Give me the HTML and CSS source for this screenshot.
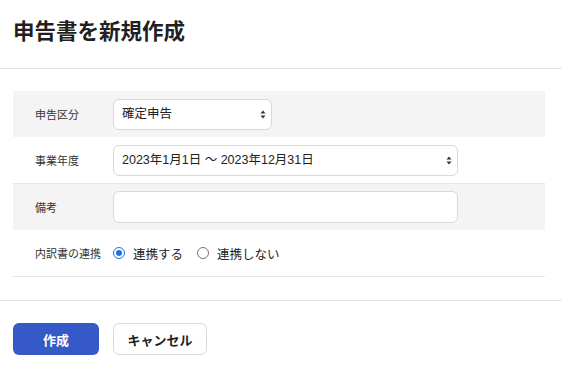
FILE: index.html
```html
<!DOCTYPE html>
<html lang="ja">
<head>
<meta charset="utf-8">
<link rel="stylesheet" href="styles.css">
</head>
<body>
<header class="header">
  <h1 class="title">申告書を新規作成</h1>
</header>
<section class="form">
  <div class="row shaded">
    <div class="label">申告区分</div>
    <div class="field">
      <div class="select-wrap short">
        <select class="select"><option>確定申告</option></select>
        <svg class="arrow" width="6" height="9" viewBox="0 0 6 9"><path d="M3 0.5 L5.5 3.5 L0.5 3.5 Z M3 8.5 L5.5 5.5 L0.5 5.5 Z" fill="#333"/></svg>
      </div>
    </div>
  </div>
  <div class="row lined">
    <div class="label">事業年度</div>
    <div class="field">
      <div class="select-wrap long">
        <select class="select"><option>2023年1月1日 ～ 2023年12月31日</option></select>
        <svg class="arrow" width="6" height="9" viewBox="0 0 6 9"><path d="M3 0.5 L5.5 3.5 L0.5 3.5 Z M3 8.5 L5.5 5.5 L0.5 5.5 Z" fill="#333"/></svg>
      </div>
    </div>
  </div>
  <div class="row shaded">
    <div class="label">備考</div>
    <div class="field">
      <input class="input" type="text">
    </div>
  </div>
  <div class="row lined">
    <div class="label">内訳書の連携</div>
    <div class="field radios">
      <label class="radio"><span class="dot on"></span>連携する</label>
      <label class="radio"><span class="dot"></span>連携しない</label>
    </div>
  </div>
</section>
<footer class="footer">
  <button class="btn primary">作成</button>
  <button class="btn secondary">キャンセル</button>
</footer>
</body>
</html>
```
FILE: styles.css
```css
* { box-sizing: border-box; }
body {
  margin: 0;
  background: #fff;
  font-family: "Noto Sans CJK JP", "Noto Sans", sans-serif;
  color: #333;
}
.header {
  padding: 16px 13px 24px;
  border-bottom: 1px solid #e3e3e3;
}
.title {
  margin: 0;
  font-size: 21.5px;
  line-height: 28px;
  font-weight: 700;
  color: #231f20;
}
.form {
  padding: 22px 17px 23px 13px;
  border-bottom: 1px solid #e3e3e3;
}
.row {
  display: flex;
  align-items: center;
  height: 47px;
}
.row.shaded { background: #f5f4f4; height: 46px; }
.row.lined { border-bottom: 1px solid #e6e6e6; }
.label {
  width: 100px;
  padding-left: 22px;
  font-size: 11px;
  color: #333;
  white-space: nowrap;
}
.field { flex: 1; }
.select-wrap { position: relative; }
.select-wrap.short { width: 159px; }
.select-wrap.long { width: 345px; }
.select {
  appearance: none;
  -webkit-appearance: none;
  width: 100%;
  height: 31px;
  border: 1px solid #d9d9d9;
  border-radius: 6px;
  background: #fff;
  padding: 0 20px 0 8px;
  font-family: "Liberation Sans", "Noto Sans CJK JP", sans-serif;
  font-size: 12.5px;
  color: #222;
}
.arrow {
  position: absolute;
  right: 6px;
  top: 11px;
}
.input {
  width: 345px;
  height: 32px;
  border: 1px solid #d9d9d9;
  border-radius: 6px;
  background: #fff;
}
.radios {
  display: flex;
  align-items: center;
  gap: 14px;
}
.radio {
  display: flex;
  align-items: center;
  gap: 8px;
  font-size: 12.5px;
  color: #222;
}
.dot {
  width: 12px;
  height: 12px;
  border-radius: 50%;
  border: 1px solid #767676;
  background: #fff;
  position: relative;
}
.dot.on {
  border: 1.5px solid #1a73e8;
}
.dot.on::after {
  content: "";
  position: absolute;
  left: 1.5px;
  top: 1.5px;
  width: 6px;
  height: 6px;
  border-radius: 50%;
  background: #1a73e8;
}
.footer {
  display: flex;
  gap: 14px;
  padding: 22px 13px;
}
.btn {
  height: 32px;
  border-radius: 6px;
  font-family: inherit;
  font-size: 13px;
  font-weight: 700;
  padding: 0;
}
.primary {
  width: 86px;
  background: #3559c7;
  color: #fff;
  border: none;
}
.secondary {
  width: 94px;
  background: #fff;
  color: #222;
  border: 1px solid #d9d9d9;
}
```
